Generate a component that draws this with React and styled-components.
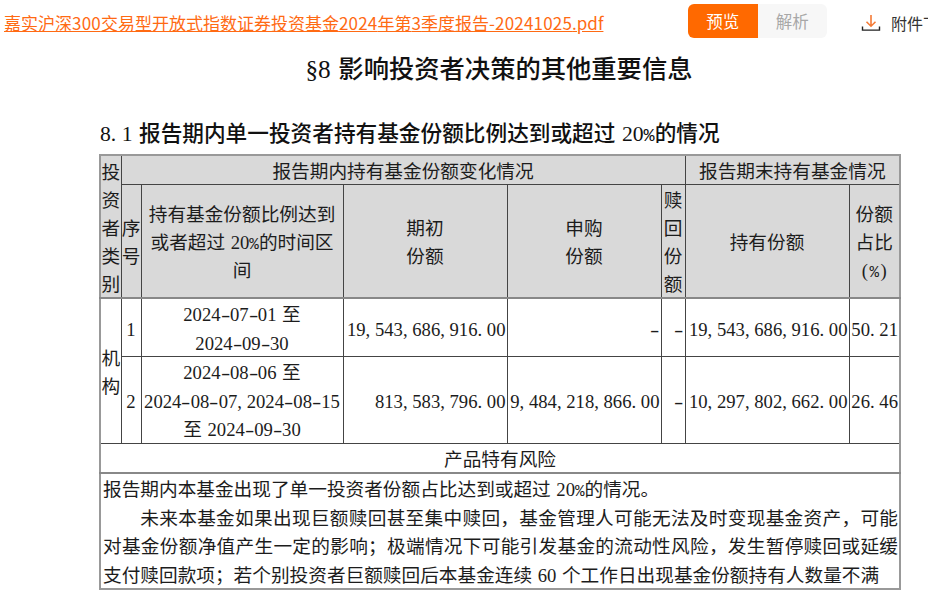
import React from 'react'
import styled, { createGlobalStyle } from 'styled-components'

const GlobalStyle = createGlobalStyle`
  html, body {
    margin: 0;
    padding: 0;
    background: #fff;
    overflow: hidden;
  }
  body {
    font-family: "Noto Sans CJK SC", "Liberation Sans", sans-serif;
  }
`

const columns = [21, 20, 202, 164, 154, 24, 164, 51]

function Num({ children }) {
  return (
    <Figures>
      {[...children].map((ch, i) => {
        if (/[0-9]/.test(ch)) return ch
        if (ch === ' ') return <Gap key={i}>{'\u00a0'}</Gap>
        if (ch === '%') return <Percent key={i}>%</Percent>
        return <Glyph key={i} $kind={ch}>{ch}</Glyph>
      })}
    </Figures>
  )
}

export default function App() {
  return (
    <Page>
      <GlobalStyle />
      <TopBar>
        <FileLink href="#">
          嘉实沪深<Digits>300</Digits>交易型开放式指数证券投资基金<Digits>2024</Digits>年第<Digits>3</Digits>季度报告-<Digits>20241025</Digits>.pdf
        </FileLink>
        <Tabs>
          <Tab $active>预览</Tab>
          <Tab>解析</Tab>
        </Tabs>
        <Attachment>
          <svg width="20" height="18" viewBox="0 0 20 18" fill="none">
            <path d="M10 1v11M5.500 7.800 10 12.200l4.500-4.400" stroke="#f47a35" strokeWidth="1.600" />
            <path d="M1.500 12.500v3.600h17v-3.600" stroke="#222" strokeWidth="1.400" />
          </svg>
          <AttachmentLabel>附件下载</AttachmentLabel>
        </Attachment>
      </TopBar>

      <Document>
        <Title><Num>§8 </Num>影响投资者决策的其他重要信息</Title>
        <SectionTitle><Num>8.1 </Num>报告期内单一投资者持有基金份额比例达到或超过<Num> 20%</Num>的情况</SectionTitle>

        <Table>
          <colgroup>
            {columns.map((w, i) => <col key={i} style={{ width: w }} />)}
          </colgroup>
          <tbody>
            <HeadRow>
              <HeadCell rowSpan={2}>投资者类别</HeadCell>
              <HeadCell colSpan={5}>报告期内持有基金份额变化情况</HeadCell>
              <HeadCell colSpan={2}>报告期末持有基金情况</HeadCell>
            </HeadRow>
            <HeadRow $heavy>
              <HeadCell>序号</HeadCell>
              <HeadCell>持有基金份额比例达到或者超过<Num> 20%</Num>的时间区间</HeadCell>
              <HeadCell>期初<br />份额</HeadCell>
              <HeadCell>申购<br />份额</HeadCell>
              <HeadCell>赎回份额</HeadCell>
              <HeadCell>持有份额</HeadCell>
              <HeadCell>份额<br />占比<br /><Num>(%)</Num></HeadCell>
            </HeadRow>
            <Row>
              <Cell rowSpan={2}>机构</Cell>
              <Cell><Num>1</Num></Cell>
              <Cell><Num>2024-07-01 </Num>至<br /><Num>2024-09-30</Num></Cell>
              <Amount><Num>19,543,686,916.00</Num></Amount>
              <Amount><Num>-</Num></Amount>
              <Amount><Num>-</Num></Amount>
              <Amount><Num>19,543,686,916.00</Num></Amount>
              <Amount><Num>50.21</Num></Amount>
            </Row>
            <Row>
              <Cell><Num>2</Num></Cell>
              <Cell><Num>2024-08-06 </Num>至<br /><Num>2024-08-07,2024-08-15</Num><br />至<Num> 2024-09-30</Num></Cell>
              <Amount><Num>813,583,796.00</Num></Amount>
              <Amount><Num>9,484,218,866.00</Num></Amount>
              <Amount><Num>-</Num></Amount>
              <Amount><Num>10,297,802,662.00</Num></Amount>
              <Amount><Num>26.46</Num></Amount>
            </Row>
            <Row $heavy>
              <Cell colSpan={8}>产品特有风险</Cell>
            </Row>
            <Row>
              <NoteCell colSpan={8}>
                <Note>报告期内本基金出现了单一投资者份额占比达到或超过<Num> 20%</Num>的情况。</Note>
                <Note $indent>未来本基金如果出现巨额赎回甚至集中赎回，基金管理人可能无法及时变现基金资产，可能对基金份额净值产生一定的影响；极端情况下可能引发基金的流动性风险，发生暂停赎回或延缓支付赎回款项；若个别投资者巨额赎回后本基金连续<Num> 60 </Num>个工作日出现基金份额持有人数量不满</Note>
              </NoteCell>
            </Row>
          </tbody>
        </Table>
      </Document>
    </Page>
  )
}

const Page = styled.div`
  width: 928px;
  height: 613px;
  overflow: hidden;
  background: #fff;
`

const TopBar = styled.header`
  display: flex;
  align-items: flex-start;
  height: 46px;
  padding: 4px 0 0 4px;
  box-sizing: border-box;
  white-space: nowrap;
`

const FileLink = styled.a`
  width: 684px;
  flex: none;
  margin-top: 7px;
  font-size: 17px;
  line-height: 24px;
  color: #ff6a13;
  text-decoration: underline;
`

const Digits = styled.span`
  letter-spacing: 0.2px;
`

const Tabs = styled.div`
  display: flex;
  flex: none;
  width: 139px;
  height: 34px;
  border-radius: 6px;
  overflow: hidden;
`

const Tab = styled.div`
  flex: 1;
  display: flex;
  align-items: center;
  justify-content: center;
  font-size: 16.500px;
  background: ${(props) => (props.$active ? '#ff6900' : '#f7f7f7')};
  color: ${(props) => (props.$active ? '#fff' : '#a8a8a8')};
`

const Attachment = styled.div`
  display: flex;
  align-items: center;
  flex: none;
  margin: 6px 0 0 34px;
  height: 26px;
`

const AttachmentLabel = styled.span`
  margin-left: 10px;
  font-size: 16px;
  line-height: 26px;
  color: #333;
`

const Document = styled.main`
  width: 800px;
  margin-left: 99px;
  color: #111;
`

const Title = styled.h1`
  margin: 0;
  font-size: 25.300px;
  line-height: 42px;
  font-weight: 500;
  text-align: center;
`

const SectionTitle = styled.h2`
  margin: 31px 0 0 1px;
  font-size: 21.670px;
  line-height: 26px;
  font-weight: 500;
  white-space: nowrap;
`

const Figures = styled.span`
  font-family: "Liberation Serif", serif;
  line-height: 1;
  font-weight: 400;
`

const Gap = styled.span`
  display: inline-block;
  width: 0.3em;
  line-height: 1;
`

const Percent = styled.span`
  font-family: "Liberation Mono", monospace;
  font-size: 0.85em;
  line-height: 1;
`

const Glyph = styled.span`
  display: inline-block;
  width: 0.5em;
  line-height: 1;
  text-align: ${(props) => (props.$kind === ',' || props.$kind === '.' ? 'left' : 'center')};
  white-space: nowrap;
  transform: ${(props) => (props.$kind === '-' ? 'scaleX(1.500)' : 'none')};
`

const Table = styled.table`
  width: 800px;
  margin-top: 8px;
  table-layout: fixed;
  border-collapse: collapse;
  border: 2px solid #999;
  font-size: 18.670px;
  line-height: 28.500px;
  color: #1c1c1c;
`

const HeadRow = styled.tr`
  background: #d9d9d9;
  border-bottom: ${(props) => (props.$heavy ? '2px solid #888' : 'none')};
`

const HeadCell = styled.td`
  padding: 0;
  border: 1px solid #444;
  line-height: 28px;
  text-align: center;
  vertical-align: middle;
  word-break: break-all;
`

const Row = styled.tr`
  border-bottom: ${(props) => (props.$heavy ? '2px solid #888' : 'none')};
`

const Cell = styled.td`
  padding: 0;
  border: 1px solid #444;
  text-align: center;
  vertical-align: middle;
  word-break: break-all;
`

const Amount = styled(Cell)`
  text-align: right;
  white-space: nowrap;
  padding-right: 1px;
`

const NoteCell = styled(Cell)`
  padding: 0 1px 0 2px;
  text-align: left;
`

const Note = styled.div`
  text-align: justify;
  text-indent: ${(props) => (props.$indent ? '2em' : '0')};
`
